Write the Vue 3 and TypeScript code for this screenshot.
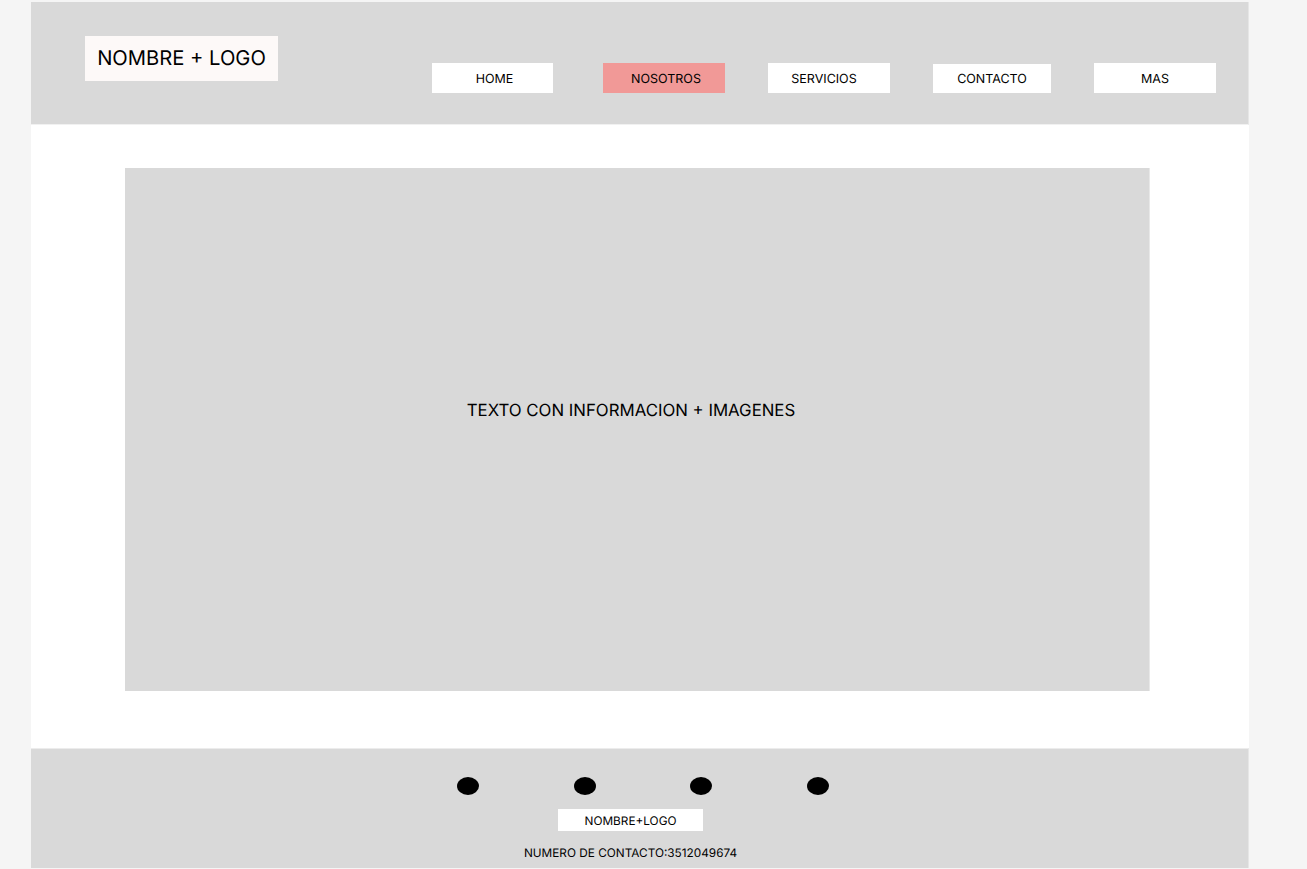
<script setup lang="ts">
interface NavItem {
  id: string
  label: string
  active?: boolean
}

const navItems: NavItem[] = [
  { id: 'home', label: 'HOME' },
  { id: 'nosotros', label: 'NOSOTROS', active: true },
  { id: 'servicios', label: 'SERVICIOS' },
  { id: 'contacto', label: 'CONTACTO' },
  { id: 'mas', label: 'MAS' },
]

const socialLinks = ['s1', 's2', 's3', 's4']
</script>

<template>
  <div class="page">
    <header class="top-bar">
      <div class="brand">NOMBRE + LOGO</div>
      <nav class="nav">
        <a
          v-for="item in navItems"
          :key="item.id"
          :class="['nav-item', `nav-${item.id}`, { 'nav-active': item.active }]"
        >
          {{ item.label }}
        </a>
      </nav>
    </header>

    <main class="content">
      <section class="panel">TEXTO CON INFORMACION + IMAGENES</section>
    </main>

    <footer class="footer">
      <div class="socials">
        <span v-for="dot in socialLinks" :key="dot" class="dot"></span>
      </div>
      <div class="footer-brand">NOMBRE+LOGO</div>
      <p class="phone">NUMERO DE CONTACTO:3512049674</p>
    </footer>
  </div>
</template>

<style scoped>
.page {
  box-sizing: border-box;
  width: 1218px;
  margin-left: 31px;
  padding-top: 2px;
  font-family: Inter, "Liberation Sans", sans-serif;
  color: #000;
  text-rendering: geometricPrecision;
}

.top-bar {
  display: flex;
  height: 123px;
  box-sizing: border-box;
  border-bottom: 1px solid #f1f1f1;
  border-right: 1px solid #e6e6e6;
  background: #d9d9d9;
}

.brand {
  display: flex;
  align-items: center;
  justify-content: center;
  width: 193px;
  height: 45px;
  margin: 34px 0 0 54px;
  padding-bottom: 2px;
  box-sizing: border-box;
  background: #fdf9f8;
  font-size: 20.2px;
}

.nav {
  display: flex;
  align-items: flex-start;
  margin: 61px 0 0 154px;
  column-gap: 43px;
}

.nav-item {
  display: flex;
  align-items: center;
  justify-content: center;
  box-sizing: border-box;
  width: 122px;
  height: 30px;
  padding: 2px 0 0 4px;
  background: #fff;
  font-size: 12.5px;
}

.nav-home {
  width: 121px;
  margin-right: 7px;
}

.nav-servicios {
  padding-left: 0;
  padding-right: 10px;
}

.nav-contacto {
  width: 118px;
  height: 29px;
  margin-top: 1px;
  padding-top: 1px;
  padding-left: 0;
}

.nav-mas {
  padding-left: 0;
}

.nav-active {
  background: #f19997;
}

.content {
  height: 623px;
  padding: 43px 0 0 94px;
  box-sizing: border-box;
  background: #fff;
}

.panel {
  display: flex;
  align-items: center;
  justify-content: center;
  width: 1025px;
  height: 523px;
  padding: 2px 12px 40px 0;
  box-sizing: border-box;
  border-right: 1px solid #e8e8e8;
  background: #d9d9d9;
  font-size: 16.8px;
}

.footer {
  display: flex;
  flex-direction: column;
  align-items: center;
  height: 120px;
  box-sizing: border-box;
  padding: 28px 18px 0 0;
  border-top: 1px solid #ececec;
  border-right: 1px solid #e6e6e6;
  background: #d9d9d9;
}

.socials {
  display: flex;
  column-gap: 94.67px;
  margin-left: 25px;
}

.dot {
  width: 22px;
  height: 18px;
  border-radius: 50%;
  background: #000;
}

.footer-brand {
  display: flex;
  align-items: center;
  justify-content: center;
  width: 145px;
  height: 22px;
  margin-top: 14px;
  padding-top: 1px;
  box-sizing: border-box;
  background: #fff;
  font-size: 11.8px;
}

.phone {
  margin: 15px 0 0;
  font-size: 11.8px;
  line-height: 14px;
}
</style>

<style>
html,
body {
  background: #f5f5f5;
}
</style>
